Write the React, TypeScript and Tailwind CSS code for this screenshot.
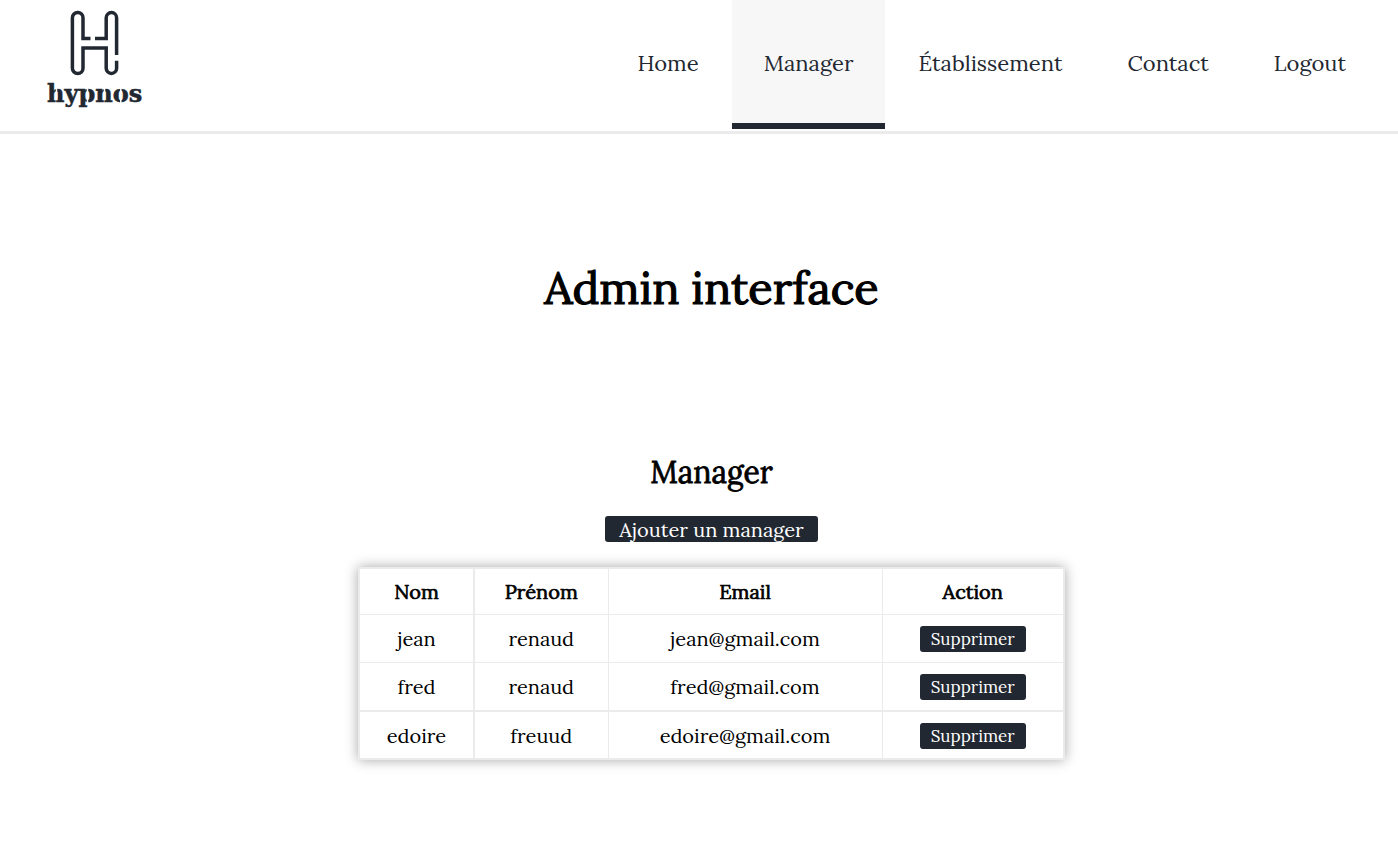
const links = ["Home", "Manager", "Établissement", "Contact", "Logout"];

const managers = [
  { nom: "jean", prenom: "renaud", email: "jean@gmail.com" },
  { nom: "fred", prenom: "renaud", email: "fred@gmail.com" },
  { nom: "edoire", prenom: "freuud", email: "edoire@gmail.com" },
];

function Logo() {
  return (
    <svg viewBox="0 0 100 108" className="h-[108px] w-[100px]" role="img" aria-label="hypnos">
      <g fill="none" stroke="#222831" strokeWidth="3.500">
        <path d="M45.500 34.500H38V13.800A5.300 5.300 0 0 0 27.400 13.800V64.200A5.300 5.300 0 0 0 38 64.200V44H61.200V64.200A5.200 5.200 0 0 0 71.600 64.200V56.700" />
        <path d="M50 34.500H61.200V13.800A5.200 5.200 0 0 1 71.600 13.800V51" />
      </g>
      <text
        x="2"
        y="98"
        fontSize="24"
        fontWeight="700"
        fill="#222831"
        stroke="#222831"
        strokeWidth="0.500"
        fontFamily="'DejaVu Serif', serif"
      >
        hypnos
      </text>
      {/* stencil breaks in the wordmark */}
      <path
        d="M11.500 84V94M42.500 85V99M59.500 84V94M75.800 84V100"
        stroke="#ffffff"
        strokeWidth="1.500"
      />
    </svg>
  );
}

function Header() {
  return (
    <header className="flex items-start justify-between border-b-[3px] border-[#ebebeb] pr-5 pb-0.5 pl-[45px]">
      <a href="#" className="mt-1 block">
        <Logo />
      </a>
      <nav className="flex gap-px">
        {links.map((label) => (
          <a
            key={label}
            href="#"
            aria-current={label === "Manager" ? "page" : undefined}
            className="flex h-[129px] items-center border-b-[6px] border-transparent px-8 pt-0.5 text-[22px] leading-8 text-[#222831] aria-[current=page]:border-[#222831] aria-[current=page]:bg-[#f7f7f7]"
          >
            {label}
          </a>
        ))}
      </nav>
    </header>
  );
}

function ManagerTable() {
  const cell = "border border-[#ebebeb] p-0 pt-px first:border-r-2";
  const head = "border border-[#ebebeb] p-0 pt-px font-normal [-webkit-text-stroke:0.7px] first:border-r-2";
  return (
    <table className="mt-[25px] w-full max-w-[707px] border-collapse border-2 border-[#ebebeb] text-center text-[20px] leading-7 shadow-[0_0_12px_rgba(0,0,0,0.35)]">
      <thead>
        <tr className="h-[46px]">
          <th scope="col" className={`${head} w-[115px]`}>Nom</th>
          <th scope="col" className={`${head} w-[134px]`}>Prénom</th>
          <th scope="col" className={`${head} w-[274px]`}>Email</th>
          <th scope="col" className={`${head} w-[182px]`}>Action</th>
        </tr>
      </thead>
      <tbody>
        {managers.map((m) => (
          <tr key={m.email} className="h-12 even:h-[49px] last:border-t-2 last:border-[#ebebeb]">
            <td className={cell}>{m.nom}</td>
            <td className={cell}>{m.prenom}</td>
            <td className={cell}>{m.email}</td>
            <td className={cell}>
              <button
                type="button"
                className="mx-auto block h-[26px] rounded-[3px] bg-[#222831] px-[11px] text-[17px] leading-[26px] text-white"
              >
                Supprimer
              </button>
            </td>
          </tr>
        ))}
      </tbody>
    </table>
  );
}

export default function App() {
  return (
    <div className="min-h-screen bg-white font-['Lora','Liberation_Serif',serif] text-black">
      <Header />
      <main className="flex flex-col items-center pt-[124px] pb-[97px] pl-[25px]">
        <h1 className="text-[45px] leading-[60px] font-normal [-webkit-text-stroke:1.2px]">Admin interface</h1>
        <h2 className="mt-[134px] text-[30px] leading-10 font-normal [-webkit-text-stroke:0.8px]">Manager</h2>
        <button
          type="button"
          className="mt-6 h-[26px] rounded-[3px] bg-[#222831] px-3.5 text-[20px] leading-7 text-white"
        >
          Ajouter un manager
        </button>
        <ManagerTable />
      </main>
    </div>
  );
}
